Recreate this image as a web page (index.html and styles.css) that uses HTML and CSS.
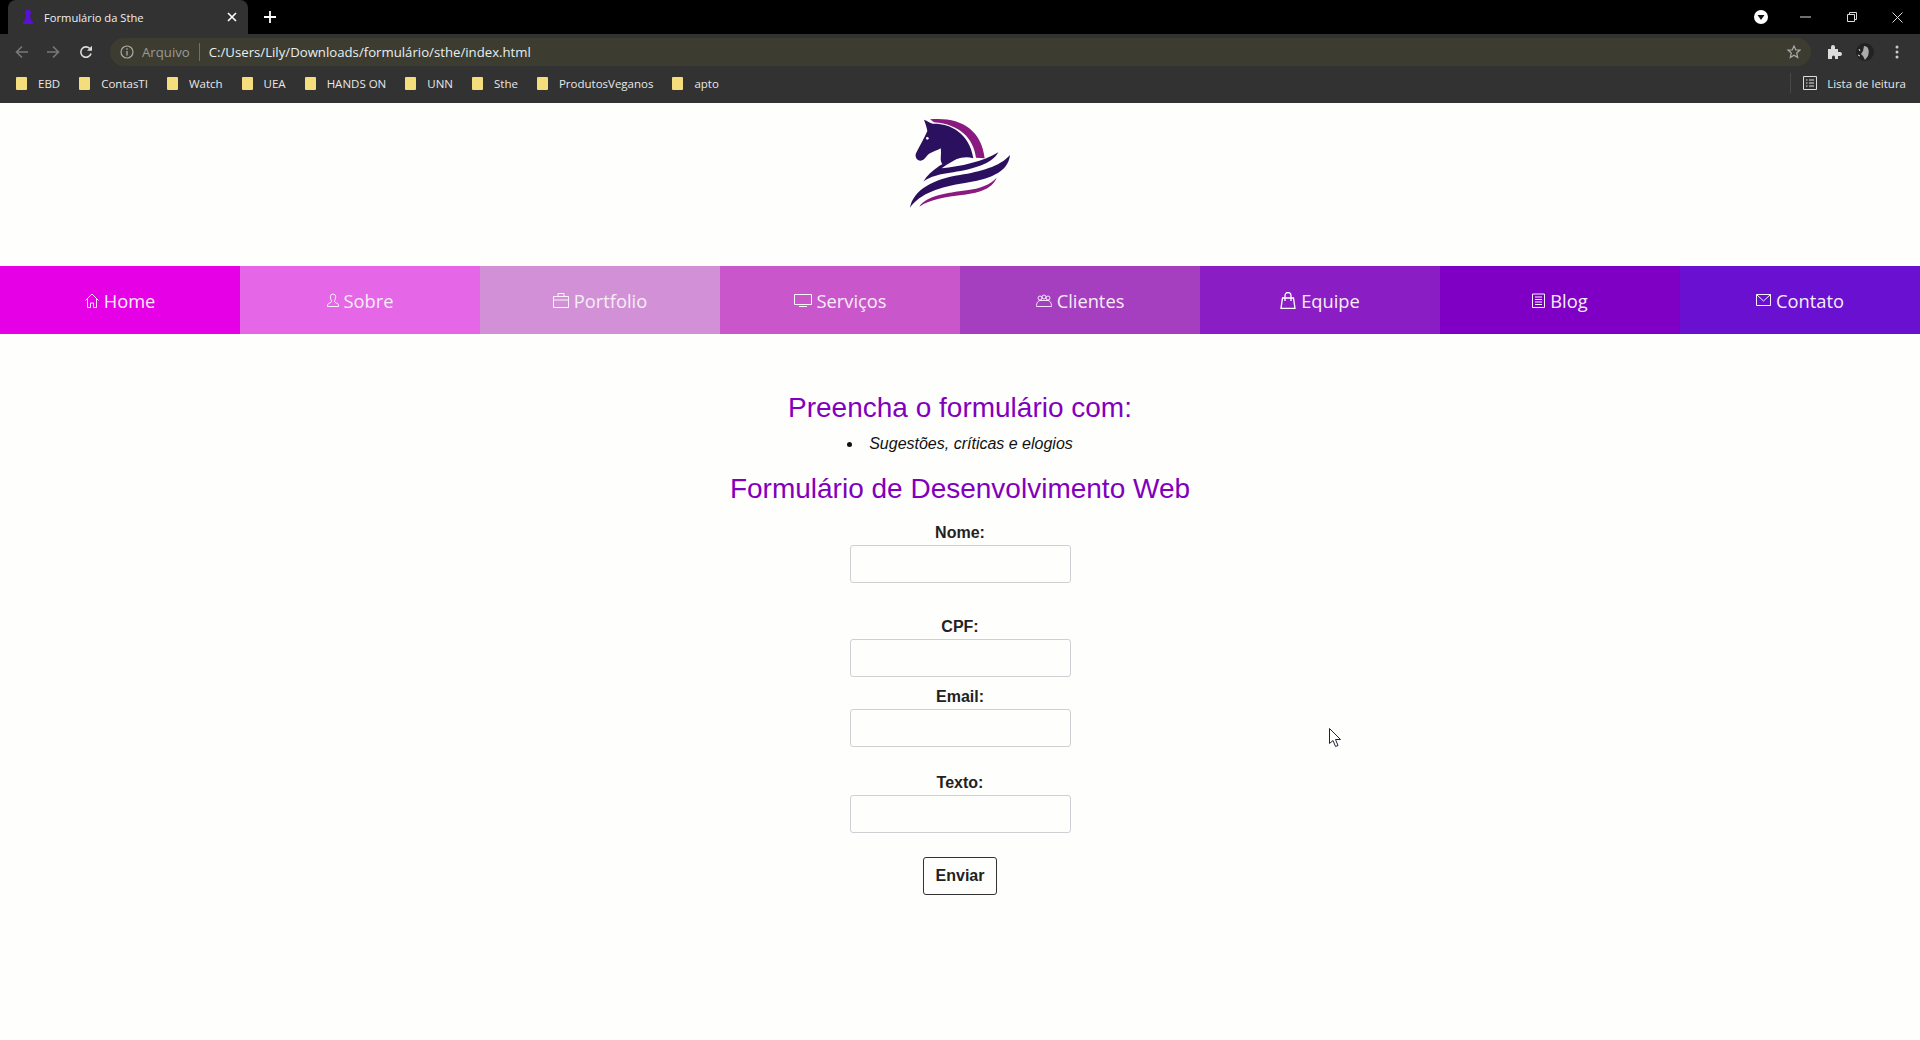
FILE: index.html
```html
<!DOCTYPE html>
<html>
  <head>
    <title>Formulário da Sthe</title>
    <link rel="stylesheet" href="styles.css">
  </head>
  <body>
    <div class="tab-strip">
      <div class="tab">
        <svg class="favicon" width="12" height="14" viewBox="0 0 12 14"><path d="M4 0h4l1 3-1 3 1 4 2 2v2H1v-2l2-2 1-4-1-3z" fill="#5a10d8"/></svg>
        <span class="tab-title">Formulário da Sthe</span>
        <svg class="tab-close" width="10" height="10" viewBox="0 0 10 10"><path d="M1 1l8 8M9 1l-8 8" stroke="#fff" stroke-width="1.6"/></svg>
      </div>
      <svg class="new-tab" width="12" height="12" viewBox="0 0 12 12"><path d="M6 0v12M0 6h12" stroke="#fff" stroke-width="1.8"/></svg>
      <div class="window-btns">
        <svg class="media-btn" width="14" height="14" viewBox="0 0 14 14"><circle cx="7" cy="7" r="7" fill="#fff"/><path d="M3.5 5h7L7 10z" fill="#111"/></svg>
        <svg class="win-min" width="11" height="2" viewBox="0 0 11 2"><path d="M0 1h11" stroke="#ddd"/></svg>
        <svg class="win-max" width="10" height="10" viewBox="0 0 10 10"><path d="M.5 2.5h7v7h-7zM2.5 2.5v-2h7v7h-2" fill="none" stroke="#ddd"/></svg>
        <svg class="win-close" width="11" height="11" viewBox="0 0 11 11"><path d="M.5.5l10 10M10.500.5l-10 10" stroke="#ddd"/></svg>
      </div>
    </div>

    <div class="toolbar">
      <svg class="tool-arrow" width="14" height="14" viewBox="0 0 14 14"><path d="M13 7H2M7 1.500L1.500 7 7 12.500" fill="none" stroke="#77787b" stroke-width="1.600"/></svg>
      <svg class="tool-arrow" width="14" height="14" viewBox="0 0 14 14"><path d="M1 7h11M7 1.500L12.500 7 7 12.500" fill="none" stroke="#77787b" stroke-width="1.600"/></svg>
      <svg class="tool-reload" width="14" height="14" viewBox="0 0 14 14"><path d="M12 8.500A5.200 5.200 0 1 1 10.600 3.300" fill="none" stroke="#ddd" stroke-width="1.600"/><path d="M13 .8v5H8z" fill="#ddd"/></svg>
      <div class="address">
        <svg width="14" height="14" viewBox="0 0 14 14"><circle cx="7" cy="7" r="6" fill="none" stroke="#aaa" stroke-width="1.200"/><path d="M7 6v4.500M7 3.300v1.500" stroke="#aaa" stroke-width="1.300"/></svg>
        <span class="addr-scheme">Arquivo</span>
        <span class="addr-sep"></span>
        <span class="addr-url">C:/Users/Lily/Downloads/formulário/sthe/index.html</span>
        <svg class="addr-star" width="14" height="14" viewBox="0 0 14 14"><path d="M7 1l1.800 4H13l-3.300 3 1 4.500L7 10.200 3.300 12.500l1-4.500L1 5h4.200z" fill="none" stroke="#aaa" stroke-width="1.200"/></svg>
      </div>
      <svg class="tool-puzzle" width="15" height="15" viewBox="0 0 15 15"><path d="M1 5h3V3a2 2 0 0 1 4 0v2h3v3h2a2 2 0 0 1 0 4h-2v3H8v-2a1.500 1.500 0 0 0-3 0v2H1z" fill="#ddd"/></svg>
      <svg class="tool-avatar" width="18" height="18" viewBox="0 0 18 18"><circle cx="9" cy="9" r="9" fill="#222"/><path d="M8 3c4 0 6 4 4 10l-3 4-2-4-2-2 2-3z" fill="#aaa"/><path d="M3 6l1 2M2 12l2 1" stroke="#ddd"/></svg>
      <svg class="tool-menu" width="4" height="14" viewBox="0 0 4 14"><circle cx="2" cy="2" r="1.500" fill="#ccc"/><circle cx="2" cy="7" r="1.500" fill="#ccc"/><circle cx="2" cy="12" r="1.500" fill="#ccc"/></svg>
    </div>

    <div class="bookmarks">
      <a class="bookmark"><i class="folder"></i>EBD</a>
      <a class="bookmark"><i class="folder"></i>ContasTI</a>
      <a class="bookmark"><i class="folder"></i>Watch</a>
      <a class="bookmark"><i class="folder"></i>UEA</a>
      <a class="bookmark"><i class="folder"></i>HANDS ON</a>
      <a class="bookmark"><i class="folder"></i>UNN</a>
      <a class="bookmark"><i class="folder"></i>Sthe</a>
      <a class="bookmark"><i class="folder"></i>ProdutosVeganos</a>
      <a class="bookmark"><i class="folder"></i>apto</a>
      <div class="reading-list">
        <svg width="14" height="14" viewBox="0 0 14 14"><path d="M.5.5h13v13H.5zM3 4h1.500M6 4h5M3 7h1.500M6 7h5M3 10h1.500M6 10h5" fill="none" stroke="#ddd"/></svg>
        <span>Lista de leitura</span>
      </div>
    </div>

    <div class="page">
      <header class="logo-area">
        <svg width="160" height="115" viewBox="0 0 480 345">
          <path d="M150 43C235 34 305 70 314 160L288 158C280 100 240 58 162 52Z" fill="#8a1a80"/>
          <path d="M132 44C142 48 150 54 158 56C205 54 268 80 280 160C255 152 225 160 190 180C176 170 186 150 182 130C172 136 160 140 150 145C140 150 134 167 122 167C110 167 104 155 108 145C118 125 132 100 142 78C140 65 136 55 132 44Z" fill="#2c1060"/>
          <circle cx="142" cy="100" r="4" fill="#fff"/>
          <path d="M130 230C150 195 200 165 250 150C225 165 205 175 185 190C240 185 310 170 355 142C335 178 280 192 220 202C180 207 150 215 130 230Z" fill="#2c1060"/>
          <path d="M90 308C100 255 160 222 240 210C300 200 360 185 390 150C385 205 320 224 255 234C180 246 120 265 90 308Z" fill="#2c1060"/>
          <path d="M118 305C140 272 200 264 260 256C300 250 330 240 350 218C335 255 290 264 245 270C200 276 150 282 118 305Z" fill="#8a1a80"/>
        </svg>
      </header>

      <nav class="menu">
        <a class="menu-item home">
          <svg width="14" height="15" viewBox="0 0 14 15"><path d="M.5 7.500L7 1l6.500 6.500M2.500 6v8.500h3V10h3v4.500h3V6" fill="none" stroke="#fff" stroke-opacity=".9"/></svg>
          Home
        </a>
        <a class="menu-item sobre">
          <svg width="12" height="14" viewBox="0 0 12 14"><path d="M6 1a2.700 2.700 0 0 1 2.700 2.700C8.700 6 7.500 7 7.500 8.500c0 1.500 4 1.500 4 3.500v1.500H.5V12c0-2 4-2 4-3.500C4.500 7 3.300 6 3.300 3.700A2.700 2.700 0 0 1 6 1z" fill="none" stroke="#fff" stroke-opacity=".9"/></svg>
          Sobre
        </a>
        <a class="menu-item portfolio">
          <svg width="16" height="15" viewBox="0 0 16 15"><path d="M.5 3.500h15v11H.5zM5 3.500V.5h6v3M.5 7h15" fill="none" stroke="#fff" stroke-opacity=".9"/></svg>
          Portfolio
        </a>
        <a class="menu-item servicos">
          <svg width="18" height="13" viewBox="0 0 18 13"><path d="M.5.5h17v10H.5zM5 12.500h8" fill="none" stroke="#fff" stroke-opacity=".95"/></svg>
          Serviços
        </a>
        <a class="menu-item clientes">
          <svg width="16" height="13" viewBox="0 0 16 13"><circle cx="4" cy="4" r="2" fill="none" stroke="#fff" stroke-opacity=".85"/><circle cx="8" cy="3" r="2" fill="none" stroke="#fff" stroke-opacity=".85"/><circle cx="12" cy="4" r="2" fill="none" stroke="#fff" stroke-opacity=".85"/><path d="M.5 11.500c0-3 2-5 3.500-5h8c1.500 0 3.500 2 3.500 5v1H.5z" fill="none" stroke="#fff" stroke-opacity=".85"/></svg>
          Clientes
        </a>
        <a class="menu-item equipe">
          <svg width="16" height="17" viewBox="0 0 16 17"><path d="M2.500 6h11l1.500 10.500H1zM5 9V3.500a3 3 0 0 1 6 0V9" fill="none" stroke="#fff" stroke-width="1.300"/></svg>
          Equipe
        </a>
        <a class="menu-item blog">
          <svg width="13" height="15" viewBox="0 0 13 15"><path d="M.5 1h12v13.500H.5zM3 4h7M3 6.500h7M3 9h7M3 11.500h7" fill="none" stroke="#fff" stroke-opacity=".95"/></svg>
          Blog
        </a>
        <a class="menu-item contato">
          <svg width="15" height="12" viewBox="0 0 15 12"><path d="M.5.5h14v11H.5zM.5.500L7.500 7l7-6.500" fill="none" stroke="#fff" stroke-opacity=".95"/></svg>
          Contato
        </a>
      </nav>

      <main class="content">
        <h2 class="title first">Preencha o formulário com:</h2>
        <ul class="notes">
          <li>Sugestões, críticas e elogios</li>
        </ul>
        <h2 class="title second">Formulário de Desenvolvimento Web</h2>

        <form class="contact-form">
          <div class="field field-nome">
            <label for="nome">Nome:</label>
            <input type="text" id="nome" name="nome">
          </div>
          <div class="field field-cpf">
            <label for="cpf">CPF:</label>
            <input type="text" id="cpf" name="cpf">
          </div>
          <div class="field field-email">
            <label for="email">Email:</label>
            <input type="text" id="email" name="email">
          </div>
          <div class="field field-texto">
            <label for="texto">Texto:</label>
            <input type="text" id="texto" name="texto">
          </div>
          <button type="button" class="send-btn">Enviar</button>
        </form>
      </main>

      <svg class="cursor" width="13" height="20" viewBox="0 0 13 20"><path d="M.5.5v15l3.500-3 2.500 6 2.500-1-2.500-6h5z" fill="#fff" stroke="#223"/></svg>
    </div>
  </body>
</html>
```

FILE: styles.css
```css
html,
body {
  margin: 0;
  height: 100%;
}

body {
  display: flex;
  flex-direction: column;
  background: #fefefc;
  font-family: "Liberation Sans", Arial, sans-serif;
  overflow: hidden;
}

/* browser chrome */
.tab-strip {
  height: 34px;
  background: #000;
  display: flex;
  align-items: center;
  color: #fff;
}

.tab {
  width: 240px;
  height: 34px;
  margin-left: 8px;
  padding: 0 11px 0 14px;
  box-sizing: border-box;
  background: #323232;
  border-radius: 8px 8px 0 0;
  display: flex;
  align-items: center;
  font-family: "Open Sans", sans-serif;
  font-size: 11.200px;
}

.tab-title {
  margin-left: 10px;
  flex: 1;
  color: #f0f0f0;
}

.new-tab {
  margin-left: 16px;
}

.window-btns {
  margin-left: auto;
  display: flex;
  align-items: center;
  padding-right: 17px;
}

.media-btn {
  margin-right: 32px;
}

.win-min {
  margin-right: 36px;
}

.win-max {
  margin-right: 35px;
}

.toolbar {
  height: 34px;
  box-sizing: border-box;
  padding: 1px 0 0 15px;
  background: #323232;
  display: flex;
  align-items: center;
}

.tool-arrow {
  margin-right: 17px;
}

.tool-reload {
  margin-left: 2px;
  margin-right: 17px;
}

.address {
  width: 1701px;
  height: 28px;
  box-sizing: border-box;
  padding: 0 10px;
  background: #3c3d30;
  border-radius: 14px;
  display: flex;
  align-items: center;
  font-family: "Open Sans", sans-serif;
  font-size: 13.200px;
}

.addr-scheme {
  margin-left: 8px;
  color: #9a9a9a;
}

.addr-sep {
  width: 1px;
  height: 18px;
  margin: 0 9px;
  background: #707070;
}

.addr-url {
  color: #e8eef2;
}

.addr-star {
  margin-left: auto;
}

.tool-puzzle {
  margin-left: 16px;
}

.tool-avatar {
  margin-left: 14px;
}

.tool-menu {
  margin-left: 21px;
}

.bookmarks {
  height: 35px;
  box-sizing: border-box;
  padding: 0 0 5px 16px;
  background: #323232;
  display: flex;
  align-items: center;
  gap: 19px;
  font-family: "Open Sans", sans-serif;
  font-size: 11.500px;
  color: #e8e8e8;
}

.bookmark {
  display: flex;
  align-items: center;
  gap: 11px;
}

.folder {
  width: 11px;
  height: 13px;
  background: #f6dd7c;
  border-radius: 1px;
}

.reading-list {
  margin-left: auto;
  display: flex;
  align-items: center;
  gap: 10px;
  padding-left: 12px;
  padding-right: 14px;
  height: 20px;
  border-left: 1px solid #484848;
}

/* page */
.page {
  flex: 1;
  position: relative;
  background: #fefefc;
}

.logo-area {
  height: 163px;
  display: flex;
  justify-content: center;
  align-items: flex-start;
  padding-top: 2px;
  box-sizing: border-box;
}

.menu {
  display: grid;
  grid-template-columns: repeat(8, 1fr);
  height: 68px;
}

.menu-item {
  display: flex;
  align-items: center;
  justify-content: center;
  gap: 5px;
  color: #f6eef6;
  font-family: "Open Sans", sans-serif;
  font-size: 18.300px;
}

.home { background: #e600e6; }
.sobre { background: #e566e6; }
.portfolio { background: #d291d6; }
.servicos { background: #c957cb; }
.clientes { background: #a63fbf; }
.equipe { background: #8a1ec4; }
.blog { background: #7f00c4; }
.contato { background: #6a10d0; }

.content {
  display: flex;
  flex-direction: column;
  align-items: center;
}

.title {
  margin: 0;
  color: #8200bd;
  font-size: 28px;
  font-weight: normal;
  line-height: 32px;
}

.title.first {
  margin-top: 58px;
}

.title.second {
  margin-top: 19px;
}

.notes {
  margin: 10px 0 0;
  padding: 0;
  list-style-position: inside;
  font-size: 16px;
  font-style: italic;
  line-height: 20px;
  color: #111;
}

.contact-form {
  margin-top: 19px;
  display: flex;
  flex-direction: column;
  align-items: center;
}

.field {
  display: flex;
  flex-direction: column;
  align-items: center;
  gap: 3px;
}

.field label {
  font-size: 16px;
  font-weight: bold;
  line-height: 18px;
  color: #222;
}

.field input {
  width: 221px;
  height: 38px;
  box-sizing: border-box;
  border: 1px solid #cfcfd4;
  border-radius: 3px;
  background: #fefefc;
}

.field-cpf {
  margin-top: 35px;
}

.field-email {
  margin-top: 11px;
}

.field-texto {
  margin-top: 27px;
}

.send-btn {
  margin-top: 24px;
  width: 74px;
  height: 38px;
  border: 1px solid #333;
  border-radius: 3px;
  background: #fefefc;
  color: #222;
  font-family: "Liberation Sans", Arial, sans-serif;
  font-size: 16px;
  font-weight: bold;
}

/* mouse pointer caught in the screenshot */
.cursor {
  position: absolute;
  left: 1329px;
  top: 625px;
}
```
